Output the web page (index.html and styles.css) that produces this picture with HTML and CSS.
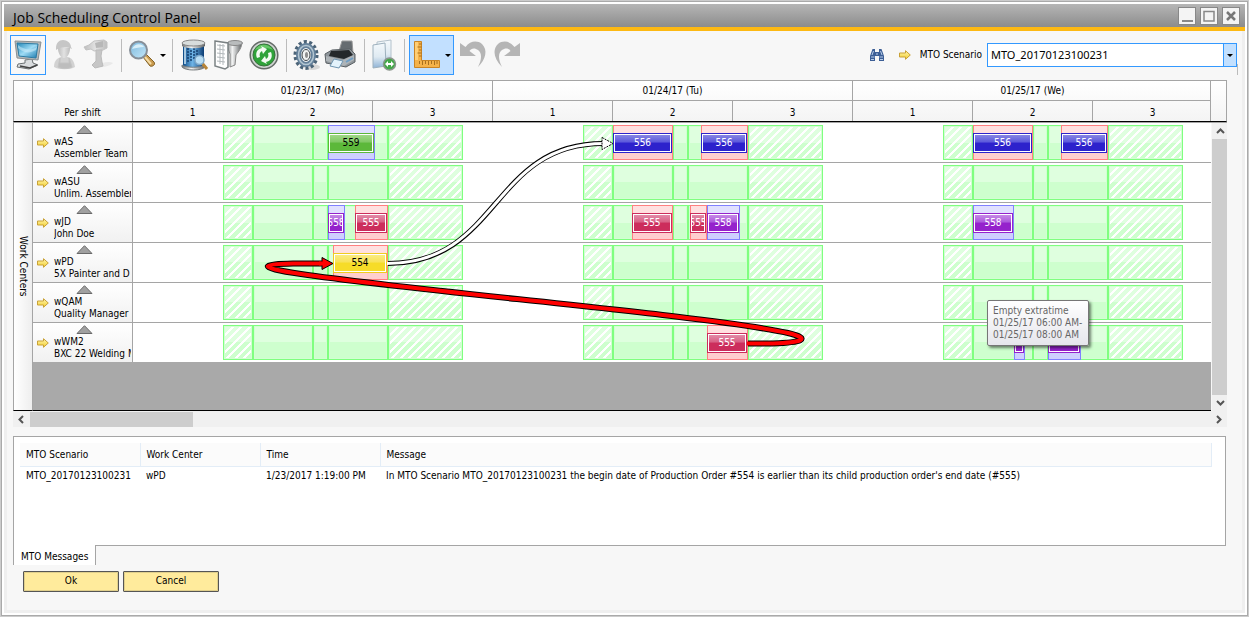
FILE: index.html
```html
<!DOCTYPE html>
<html lang="en">
<head>
<meta charset="utf-8">
<title>Job Scheduling Control Panel</title>
<link rel="stylesheet" href="styles.css">
</head>
<body>
<svg class="defs" aria-hidden="true">
  <defs>
    <linearGradient id="gBlue" x1="0" y1="0" x2="1" y2="1"><stop offset="0" stop-color="#1f86b8"/><stop offset=".5" stop-color="#9fdcf5"/><stop offset="1" stop-color="#1878ad"/></linearGradient>
    <linearGradient id="gLens" x1="0" y1="0" x2="1" y2="1"><stop offset="0" stop-color="#7db8dc"/><stop offset="1" stop-color="#c4e8fa"/></linearGradient>
    <linearGradient id="gTank" x1="0" y1="0" x2="1" y2="0"><stop offset="0" stop-color="#0c4a86"/><stop offset=".45" stop-color="#6fb4e6"/><stop offset="1" stop-color="#0b3c74"/></linearGradient>
    <linearGradient id="gMetal" x1="0" y1="0" x2="1" y2="0"><stop offset="0" stop-color="#6d7173"/><stop offset=".4" stop-color="#f2f3f3"/><stop offset="1" stop-color="#5c6062"/></linearGradient>
    <linearGradient id="gGhost" x1="0" y1="0" x2="1" y2="0"><stop offset="0" stop-color="#bdbdbd"/><stop offset=".5" stop-color="#e2e2e2"/><stop offset="1" stop-color="#bcbcbc"/></linearGradient>
    <linearGradient id="gArrow" x1="0" y1="0" x2="0" y2="1"><stop offset="0" stop-color="#fff6b0"/><stop offset="1" stop-color="#f3cf2e"/></linearGradient>
    <linearGradient id="gPage" x1="0" y1="0" x2="0" y2="1"><stop offset="0" stop-color="#f4f9fc"/><stop offset=".55" stop-color="#dfeaf2"/><stop offset="1" stop-color="#8fb3d6"/></linearGradient>
    <symbol id="arrow" viewBox="0 0 12 10"><path d="M.5 3h6V.7L11.3 5 6.500 9.300V7h-6z" fill="url(#gArrow)" stroke="#c9a136"/></symbol>
    <symbol id="tri" viewBox="0 0 17 9"><path d="M8.500.7 16 8.500H1z" fill="#a0a0a0" stroke="#6a6a6a"/></symbol>
  </defs>
</svg>

<main class="window">
  <header class="titlebar">
    <h1>Job Scheduling Control Panel</h1>
    <div class="controls">
      <button aria-label="Minimize"><svg viewBox="0 0 16 16"><path d="M3 13h11" stroke="#888" stroke-width="2"/></svg></button>
      <button aria-label="Maximize"><svg viewBox="0 0 16 16"><path d="M3 3.500h10v9.500H3z" fill="none" stroke="#888" stroke-width="1.500"/></svg></button>
      <button aria-label="Close"><svg viewBox="0 0 16 16"><path d="M4 4l8 8M12 4l-8 8" stroke="#777" stroke-width="2.500"/></svg></button>
    </div>
  </header>

  <div class="body">
    <div class="toolbar" role="toolbar" aria-label="Scheduling tools">
      <button class="tool on" aria-label="Board view"><svg viewBox="0 0 32 32">
        <path d="M13 21l7-1 1 4 5 2-9 4-12-2 1-3 7-1z" fill="#d9dcde" stroke="#6d7274"/><path d="M8 27l10 2 7-3" fill="none" stroke="#444" stroke-width="1.500"/>
        <path d="M3 2l26 1-3 18-21-2z" fill="#b6babc" stroke="#8b9092"/><path d="M5 4l21 1-2 14-17-2z" fill="url(#gBlue)" stroke="#2c7ba3"/><path d="M6 6c6 5 14 6 19 2l-1 3c-7 4-12 3-18-2z" fill="#d3f0fb" opacity=".5"/></svg></button>
      <button class="tool" aria-label="Employees"><svg viewBox="0 0 32 32">
        <path d="M5 28c0-6 3-9 7-10h7c4 1 6 4 7 10-5 3-16 3-21 0z" fill="#d2d2d2"/><path d="M9 9c0 6 3 10 6 10s6-4 6-10z" fill="url(#gGhost)"/><path d="M7 9c0-5 3-8 7-8s8 3 8 7l1 2c-5-2-11-2-16 1z" fill="#c6c6c6"/><path d="M11 19v5h9v-5l3 9c-4 2-10 2-14 0z" fill="#bdbdbd" stroke="#c4c4c4"/></svg></button>
      <button class="tool" aria-label="Machines"><svg viewBox="0 0 32 32">
        <path d="M12 28c7-5 14-6 18-4-3 3-10 5-18 4z" fill="#e9e9e9"/><path d="M1 8l5-2 5-4 10-1 3 2v6l-4 2-9 1-3-2-5 1z" fill="url(#gGhost)" stroke="#c2c2c2"/><path d="M13 11h6l-1 6 1 6 1 4-8 2-3-3 4-4z" fill="#c6c6c6" stroke="#bbb"/><path d="M12 4l8-2v6l-7 1z" fill="#b7b7b7"/></svg></button>
      <span class="sep"></span>
      <button class="tool drop" aria-label="Zoom"><svg viewBox="0 0 32 32">
        <path d="M17 18l3-3 8 8c2 3-2 5-4 4z" fill="#c99a4e" stroke="#826329"/><path d="M19 18l6 7" stroke="#f5dca6" stroke-width="2"/><circle cx="12.500" cy="11" r="8.500" fill="url(#gLens)" stroke="#868f98" stroke-width="2"/><path d="M6 10c2-6 10-6 12-2-4 0-8 1-12 2z" fill="#e8f7fd" opacity=".8"/></svg><span class="caret"></span></button>
      <span class="sep"></span>
      <button class="tool" aria-label="Query data"><svg viewBox="0 0 32 32">
        <path d="M5 5v22c3 4 18 4 21 0V5z" fill="url(#gTank)"/><path d="M4 26c3 3 20 3 23 0v2c-3 4-20 4-23 0z" fill="url(#gMetal)" stroke="#7b7f80"/><path d="M10 9v15M13 11v12M16 9v11M19 11v8" stroke="#16406f" stroke-width="1.500" stroke-dasharray="2 1"/><path d="M7 8v17" stroke="#d4ecfa" stroke-width="1.500"/><path d="M4 4v3c3 3 20 3 23 0V4z" fill="url(#gMetal)"/><ellipse cx="15.500" cy="4" rx="11.500" ry="3" fill="#d8dddd" stroke="#888"/><path d="M24 24l5 6" stroke="#b88436" stroke-width="3"/><circle cx="21.500" cy="21" r="4.500" fill="#b9def5" stroke="#7fa8c8" stroke-width="1.500"/></svg></button>
      <button class="tool" aria-label="Filter"><svg viewBox="0 0 32 32">
        <path d="M14 4h16c-1 7-5 10-6 12l-1 10-5 2V15z" fill="url(#gMetal)" stroke="#888"/><ellipse cx="23" cy="4" rx="7.500" ry="2.500" fill="#b9bcbd" stroke="#888"/><path d="M3 2l13 2v24l-3 2L3 27z" fill="#fff" stroke="#7b8284" stroke-width="1.500"/><path d="M5 6l8 1M5 10l8 1M5 14l8 1M5 18l8 1M5 22l8 1M8 5v20M11 5v21" stroke="#b3b9bc"/></svg></button>
      <button class="tool mid" aria-label="Refresh"><svg viewBox="0 0 32 32">
        <circle cx="17" cy="16" r="13.800" fill="#d0d4d2" stroke="#656b68" stroke-width="1.500"/><circle cx="17" cy="16" r="11" fill="#2fa33a" stroke="#39703d"/><path d="M8 11c3-7 14-7 18 0-6-3-12-2-18 0z" fill="#8bdd86" opacity=".6"/><path d="M10 19c-2-5 0-9 5-10l-1-2 6 3-4 5-1-3c-2 1-3 3-2 6zM24 13c2 5 0 9-5 10l1 2-6-3 4-5 1 3c2-1 3-3 2-6z" fill="#f3fbf2"/></svg></button>
      <span class="sep"></span>
      <button class="tool slim" aria-label="Settings"><svg viewBox="0 0 32 32">
        <ellipse cx="22" cy="28" rx="8" ry="3" fill="#d6d6d6"/><ellipse cx="16" cy="16" rx="10.500" ry="13" fill="none" stroke="#4b6377" stroke-width="4" stroke-dasharray="3 2.300"/><ellipse cx="16" cy="16" rx="7.500" ry="9.500" fill="none" stroke="#64809a" stroke-width="5"/><ellipse cx="16" cy="16" rx="7.500" ry="9.500" fill="none" stroke="#b3c6d2" stroke-width="1.500"/><ellipse cx="16" cy="16" rx="4" ry="5.500" fill="#f2f3f3" stroke="#3b4348"/><ellipse cx="16.500" cy="16" rx="1.500" ry="3" fill="#8d8d8d"/></svg></button>
      <button class="tool wide" aria-label="Print"><svg viewBox="0 0 32 32">
        <path d="M15 12l3-10h10l1 12z" fill="#666c70" stroke="#999"/><path d="M1 15l7-4 18-1 5 5v8l-9 5-20-4z" fill="#8f969b" stroke="#5a6064"/><path d="M7 12l18-1 4 5-9 4-15-3z" fill="#24282b"/><path d="M2 17l17 4 11-5v5l-10 6-18-5z" fill="#aeb4b8"/><path d="M10 20l9 2-4 7-9-2z" fill="#e4f3fc" stroke="#7096b2"/><path d="M22 23l7-4" stroke="#6f9ec4" stroke-width="2"/></svg></button>
      <span class="sep"></span>
      <button class="tool slim" aria-label="Export page"><svg viewBox="0 0 32 32">
        <path d="M9 3l14-2v24l-14 2z" fill="url(#gPage)" stroke="#b4c2cc"/><path d="M5 6l12-2 1 23-13 2z" fill="url(#gPage)" stroke="#9db0bd"/><circle cx="21.500" cy="25" r="6" fill="#42a847" stroke="#8a958c" stroke-width="1.500"/><path d="M17 25l3-3v2h3v-2l3 3-3 3v-2h-3v2z" fill="#fff"/></svg></button>
      <span class="sep"></span>
      <button class="tool drop on active" aria-label="Ruler"><svg viewBox="0 0 32 32">
        <path d="M3.500 2.500h7v19h18v7h-25z" fill="#f5b24a" stroke="#c98425"/><path d="M4 3h3v18H4z" fill="#ffce75"/><path d="M10.500 5H8M10.500 8H6.500M10.500 11H8M10.500 14H6.500M10.500 17H8M8.500 22v3M11.500 22v4M14.500 22v3M17.500 22v4M20.500 22v3M23.500 22v4M26 22v3" stroke="#a8701f"/></svg><span class="caret"></span></button>
      <button class="tool" aria-label="Undo"><svg viewBox="0 0 32 32"><path d="M3 4l5.500 4C13 2 20 1 25 5c6 6 4 15-4 23 4-8 4-14 0-17-3-2.500-7-2-8.500 1l6.500 5H3z" fill="#b5b5b5"/></svg></button>
      <button class="tool" aria-label="Redo"><svg viewBox="0 0 32 32"><path d="M29 4l-5.500 4C19 2 12 1 7 5c-6 6-4 15 4 23-4-8-4-14 0-17 3-2.500 7-2 8.500 1L13 17h16z" fill="#b5b5b5"/></svg></button>

      <div class="scenario">
        <button class="find" aria-label="Find"><svg viewBox="0 0 16 14"><path d="M3.500 1H6v3h4V1h2.500L15 8v5h-5V8H6v5H1V8z" fill="#3d5f96"/><path d="M2 9h3.500M10.500 9H14M4.500 3L3 7M11.500 3L13 7M2 11.500h3M11 11.500h3M7 6h2" stroke="#b8cdea"/></svg></button>
        <svg class="arrow"><use href="#arrow"/></svg>
        <label for="scenario">MTO Scenario</label>
        <span class="combo"><select id="scenario"><option>MTO_20170123100231</option></select><span class="combo-btn"><span class="caret"></span></span></span>
      </div>
    </div>

    <section class="gantt" aria-label="Schedule">
      <div class="g-head">
        <div class="corner"></div>
        <div class="per">Per shift</div>
        <div class="scale">
          <div class="date">01/23/17 (Mo)</div><div class="date">01/24/17 (Tu)</div><div class="date">01/25/17 (We)</div>
          <div>1</div><div>2</div><div>3</div><div>1</div><div>2</div><div>3</div><div>1</div><div>2</div><div>3</div>
        </div>
        <div class="corner"></div>
      </div>
      <div class="g-body">
        <div class="side"><span>Work Centers</span></div>
        <div class="lanes">
          <div class="lane"><div class="who"><svg class="tri"><use href="#tri"/></svg><svg class="arrow"><use href="#arrow"/></svg><p>wAS<br>Assembler Team</p></div>
            <div class="track">
              <div class="day"><i class="x"></i><i></i><i></i><i></i><i class="x"></i></div><div class="day"><i class="x"></i><i></i><i></i><i></i><i class="x"></i></div><div class="day"><i class="x"></i><i></i><i></i><i></i><i class="x"></i></div>
              <div class="zone blue" style="left:195px;width:47px"><b class="green">559</b></div>
              <div class="zone red" style="left:480px;width:60px"><b class="navy">556</b></div>
              <div class="zone red" style="left:568px;width:47px"><b class="navy">556</b></div>
              <div class="zone red" style="left:840px;width:60px"><b class="navy">556</b></div>
              <div class="zone red" style="left:928px;width:47px"><b class="navy">556</b></div>
            </div></div>
          <div class="lane"><div class="who"><svg class="tri"><use href="#tri"/></svg><svg class="arrow"><use href="#arrow"/></svg><p>wASU<br>Unlim. Assembler</p></div>
            <div class="track">
              <div class="day"><i class="x"></i><i></i><i></i><i></i><i class="x"></i></div><div class="day"><i class="x"></i><i></i><i></i><i></i><i class="x"></i></div><div class="day"><i class="x"></i><i></i><i></i><i></i><i class="x"></i></div>
            </div></div>
          <div class="lane"><div class="who"><svg class="tri"><use href="#tri"/></svg><svg class="arrow"><use href="#arrow"/></svg><p>wJD<br>John Doe</p></div>
            <div class="track">
              <div class="day"><i class="x"></i><i></i><i></i><i></i><i class="x"></i></div><div class="day"><i class="x"></i><i></i><i></i><i></i><i class="x"></i></div><div class="day"><i class="x"></i><i></i><i></i><i></i><i class="x"></i></div>
              <div class="zone blue" style="left:195px;width:17px"><b class="violet">558</b></div>
              <div class="zone red" style="left:222px;width:33px"><b class="rose">555</b></div>
              <div class="zone red" style="left:499px;width:41px"><b class="rose">555</b></div>
              <div class="zone red" style="left:557px;width:17px"><b class="rose">555</b></div>
              <div class="zone blue" style="left:574px;width:33px"><b class="violet">558</b></div>
              <div class="zone blue" style="left:840px;width:41px"><b class="violet">558</b></div>
            </div></div>
          <div class="lane"><div class="who"><svg class="tri"><use href="#tri"/></svg><svg class="arrow"><use href="#arrow"/></svg><p>wPD<br>5X Painter and D</p></div>
            <div class="track">
              <div class="day"><i class="x"></i><i></i><i></i><i></i><i class="x"></i></div><div class="day"><i class="x"></i><i></i><i></i><i></i><i class="x"></i></div><div class="day"><i class="x"></i><i></i><i></i><i></i><i class="x"></i></div>
              <div class="zone red" style="left:200px;width:55px"><b class="yellow">554</b></div>
            </div></div>
          <div class="lane"><div class="who"><svg class="tri"><use href="#tri"/></svg><svg class="arrow"><use href="#arrow"/></svg><p>wQAM<br>Quality Manager</p></div>
            <div class="track">
              <div class="day"><i class="x"></i><i></i><i></i><i></i><i class="x"></i></div><div class="day"><i class="x"></i><i></i><i></i><i></i><i class="x"></i></div><div class="day"><i class="x"></i><i></i><i></i><i></i><i class="x"></i></div>
            </div></div>
          <div class="lane"><div class="who"><svg class="tri"><use href="#tri"/></svg><svg class="arrow"><use href="#arrow"/></svg><p>wWM2<br>BXC 22 Welding M</p></div>
            <div class="track">
              <div class="day"><i class="x"></i><i></i><i></i><i></i><i class="x"></i></div><div class="day"><i class="x"></i><i></i><i></i><i></i><i class="x"></i></div><div class="day"><i class="x"></i><i></i><i></i><i></i><i class="x"></i></div>
              <div class="zone red" style="left:574px;width:41px"><b class="rose">555</b></div>
              <div class="zone blue" style="left:881px;width:11px"><b class="violet"></b></div>
              <div class="zone blue" style="left:915px;width:33px"><b class="violet">558</b></div>
            </div></div>
          <svg class="links" aria-hidden="true">
            <g fill="none">
              <path d="M255 140.500C367 140.500 358 20.500 470 20.500" stroke="#000" stroke-width="5"/>
              <path d="M254 140.500C367 140.500 358 20.500 471 20.500" stroke="#fff" stroke-width="3"/>
              <path d="M469 14.500l11 6-11 6z" fill="#fff" stroke="#000" stroke-dasharray="2 1"/>
              <path d="M615 220.500H640C668 219.500 680 216 655 210C570 192 290 169 168 151C120 144 130 141 160 140.500H190" stroke="#000" stroke-width="6"/>
              <path d="M614 220.500H640C668 219.500 680 216 655 210C570 192 290 169 168 151C120 144 130 141 160 140.500H190" stroke="#f00" stroke-width="4"/>
            </g>
            <path d="M189 134.500l11 6-11 6z" fill="#f00" stroke="#000"/><path d="M186 138.500h4v4h-4z" fill="#f00"/>
          </svg>
          <div class="tip" role="tooltip">Empty extratime<br>01/25/17 06:00 AM-<br>01/25/17 08:00 AM</div>
        </div>
        <div class="vscroll"><button aria-label="Scroll up"><svg viewBox="0 0 9 6"><path d="M1 5l3.500-3.500L8 5"/></svg></button><span></span><button aria-label="Scroll down"><svg viewBox="0 0 9 6"><path d="M1 1l3.500 3.500L8 1"/></svg></button></div>
      </div>
      <div class="hscroll"><button aria-label="Scroll left"><svg viewBox="0 0 6 9"><path d="M5 1L1.500 4.500 5 8"/></svg></button><span></span><button aria-label="Scroll right"><svg viewBox="0 0 6 9"><path d="M1 1l3.500 3.500L1 8"/></svg></button></div>
    </section>

    <section class="messages">
      <table>
        <thead><tr><th class="c">MTO Scenario</th><th class="c">Work Center</th><th class="c">Time</th><th>Message</th></tr></thead>
        <tbody><tr><td>MTO_20170123100231</td><td>wPD</td><td>1/23/2017 1:19:00 PM</td><td>In MTO Scenario MTO_20170123100231 the begin date of Production Order #554 is earlier than its child production order's end date (#555)</td></tr></tbody>
      </table>
    </section>
    <button class="tab">MTO Messages</button>
    <div class="actions"><button>Ok</button><button>Cancel</button></div>
  </div>
</main>
</body>
</html>
```
FILE: styles.css
```css
* { box-sizing: border-box; }
html { height: 100%; background: #ccc; }
body { margin: 0; min-height: 100%; padding: 1px; display: flex; font: 10px/12px "DejaVu Sans Condensed", "Noto Sans", sans-serif; color: #000; }
button { font: inherit; color: inherit; margin: 0; padding: 0; border: 0; background: none; }
svg { display: block; }
.defs { position: absolute; width: 0; height: 0; }

.window { flex: 1; min-width: 0; display: flex; flex-direction: column; border: 1px solid #aaa; background: #fff; padding: 2px; }
.titlebar { display: flex; align-items: center; justify-content: space-between; height: 27px; padding: 0 5px 0 9px; background: linear-gradient(#b6b6b6, #8c8c8c); border-bottom: 4px solid #fdb913; }
h1 { margin: 0; font: 14px/20px "Open Sans", "Noto Sans", sans-serif; padding-top: 4px; }
.controls { display: flex; gap: 4px; }
.controls button { width: 18px; height: 18px; border: 1px solid #888; background: #f4f4f4; }
.controls svg { width: 16px; height: 16px; }

.body { flex: 1; background: #f7f7f7; border: solid #efefef; border-width: 0 3px 3px 3px; padding: 4px 15px 0 4px; }
.toolbar { display: flex; align-items: center; height: 40px; margin-right: -11px; margin-left: -1px; }
.toolbar::after { content: ""; width: 1px; height: 11px; align-self: flex-end; background: #bbb; }
.tool { display: flex; align-items: center; justify-content: center; width: 34px; height: 40px; flex: none; }
.tool > svg { width: 32px; height: 32px; flex: none; }
.tool.wide { width: 38px; }
.tool.mid { width: 36px; }
.tool.slim { width: 30px; }
.tool.on { width: 36px; border: 1px solid #3399ff; margin-right: 2px; }
.tool.drop { width: 41px; gap: 2px; justify-content: flex-start; }
.tool.drop.active { width: 45px; padding-left: 1px; background: #c2e0ff; }
.caret { border: solid transparent; border-width: 3px 3px 0; border-top-color: #000; }
.sep { width: 1px; height: 33px; background: #bbb; margin: 0 4px 0 5px; }
.scenario { margin-left: auto; display: flex; align-items: center; }
.find { width: 16px; height: 14px; margin-right: 14px; }
.arrow { width: 12px; height: 10px; flex: none; }
.scenario label { margin: 0 5px 0 9px; }
.combo { display: flex; width: 250px; height: 24px; border: 1px solid #3399ff; background: #fff; }
.combo select { flex: 1; appearance: none; border: 0; padding: 0 3px; background: #fff; color: #000; font: 11px/20px "Noto Sans", sans-serif; }
.combo-btn { width: 13px; display: flex; align-items: center; justify-content: center; background: #c2e0ff; border-left: 1px solid #3399ff; }

.gantt { margin-top: 5px; margin-left: 2px; }
.g-head, .g-body { display: grid; }
.g-head { grid-template-columns: 19px 100px 1fr 15px; height: 42px; border: 1px solid #a5a5a5; border-bottom-color: #000; background: linear-gradient(#fff, #f4f4f4); }
.corner, .per { border-right: 1px solid #a5a5a5; }
.corner:last-child { border: 0; }
.per { display: flex; align-items: flex-end; justify-content: center; padding-bottom: 2px; }
.scale { display: grid; grid-template-columns: repeat(9, 120px); grid-template-rows: 20px 20px; overflow: hidden; text-align: center; border-right: 1px solid #a5a5a5; }
.scale div { border-right: 1px solid #a5a5a5; line-height: 23px; }
.scale .date { grid-column: span 3; border-bottom: 1px solid #a5a5a5; line-height: 20px; }
.g-body { grid-template-columns: 20px 1fr 16px; height: 289px; border-top: 1px solid #a5a5a5; }
.side { border: solid #a5a5a5; border-width: 0 1px 1px; border-bottom-color: #000; background: linear-gradient(90deg, #fff, #eee); display: flex; align-items: center; justify-content: center; }
.side span { writing-mode: vertical-rl; }
.lanes { position: relative; overflow: hidden; background: #a9a9a9; border-bottom: 1px solid #000; }
.lane { display: grid; grid-template-columns: 100px 1fr; height: 40px; background: #fff; border-bottom: 1px solid #a5a5a5; }
.lane:nth-child(6) { border-bottom: 0; height: 39px; }
.who { display: grid; grid-template-columns: 12px 1fr; grid-template-rows: 11px 24px; column-gap: 5px; padding: 2px 1px 0 4px; border-right: 1px solid #a5a5a5; background: linear-gradient(#fff, #f1f1f1); overflow: hidden; }
.tri { grid-column: 1 / 3; justify-self: center; width: 17px; height: 9px; }
.who .arrow { margin-top: 2px; }
.who p { margin: 0; white-space: nowrap; overflow: hidden; }
.track { position: relative; display: flex; padding-top: 2px; overflow: hidden; }
.day { flex: none; width: 360px; height: 35px; padding: 0 30px 0 90px; display: grid; grid-template-columns: 30px 60px 15px 60px 75px; }
.day i { border: 1px solid #80ff80; background: linear-gradient(#dfffdf 50%, #ceffce 50%); box-shadow: inset 0 0 0 1px #d2ffd2; }
.day .x { background: repeating-linear-gradient(135deg, #fff 0 2px, transparent 2px 6px), linear-gradient(#dfffdf 50%, #ceffce 50%); }
.zone { position: absolute; top: 2px; height: 35px; padding-top: 8px; }
.zone.red { background: linear-gradient(#ffe0e0 50%, #ffcece 50%); box-shadow: inset 0 0 0 1px #ff8080; }
.zone.blue { background: linear-gradient(#e0e0ff 50%, #cecffe 50%); box-shadow: inset 0 0 0 1px #8080ff; }
.zone b { display: flex; align-items: center; justify-content: center; width: calc(100% - 1px); height: 20px; overflow: hidden; border: 1px solid; box-shadow: inset 0 0 0 1px #fff; font-weight: 400; }
.zone .green { background: linear-gradient(#a4d98c, #80c864 45%, #5cb83a 50%); border-color: #5cb83a; }
.zone .navy { background: linear-gradient(#8c8ce4, #5c58dc 45%, #2d22cc 50%); border-color: #2d22cc; color: #fff; }
.zone .violet { background: linear-gradient(#c890e8, #ac58dc 45%, #9522cc 50%); border-color: #9522cc; color: #fff; }
.zone .rose { background: linear-gradient(#e490ac, #d86084 45%, #cc2d5c 50%); border-color: #cc2d5c; color: #fff; }
.zone .yellow { background: linear-gradient(#faec88, #f8e258 45%, #f6dc28 50%); border-color: #f0cc20; }
.links { position: absolute; left: 100px; top: 0; width: 1080px; height: 240px; }
.tip { position: absolute; left: 954px; top: 177px; padding: 4px 6px 4px 5px; border: 1px solid #767676; border-radius: 2px; background: linear-gradient(#fff, #e6e6ec); color: #666; box-shadow: 2px 2px 3px rgba(0,0,0,.5); white-space: nowrap; }
.vscroll { display: flex; flex-direction: column; background: #f0f0f0; margin-left: 1px; }
.vscroll button, .hscroll button { display: flex; align-items: center; justify-content: center; width: 16px; height: 16px; }
.vscroll span { flex: 1; width: 15px; background: #cdcdcd; }
.vscroll svg { width: 9px; height: 6px; }
.vscroll path, .hscroll path { fill: none; stroke: #555; stroke-width: 2; }
.hscroll { display: flex; align-items: center; background: #f0f0f0; }
.hscroll span { width: 163px; height: 15px; margin-left: 1px; background: #cdcdcd; }
.hscroll svg { width: 6px; height: 9px; }
.hscroll button:last-child { margin-left: auto; }

.messages { margin: 9px 1px 0 2px; height: 110px; border: 1px solid #a5a5a5; background: #fff; padding: 6px 6px 0; }
.messages table { width: calc(100% - 7px); border-collapse: collapse; table-layout: fixed; }
.messages th { height: 23px; font-weight: 400; text-align: left; background: #fbfbfb; border-right: 1px solid #e3edf7; border-bottom: 1px solid #e3edf7; padding: 2px 0 0 6px; }
.messages .c { width: 120px; }
.messages td { height: 20px; padding: 0 0 0 6px; white-space: nowrap; }
.tab { display: block; margin: -1px 0 0 2px; height: 20px; padding: 3px 7px 0; background: #fff; border: solid #a5a5a5; border-width: 0 1px; position: relative; }
.actions { display: flex; gap: 4px; margin: 6px 0 0 12px; }
.actions button { width: 96px; height: 21px; border: 1px solid #555; border-radius: 1px; background: #ffeb9c; box-shadow: inset 0 0 0 1px #e0cf8c; padding-bottom: 2px; }
```
